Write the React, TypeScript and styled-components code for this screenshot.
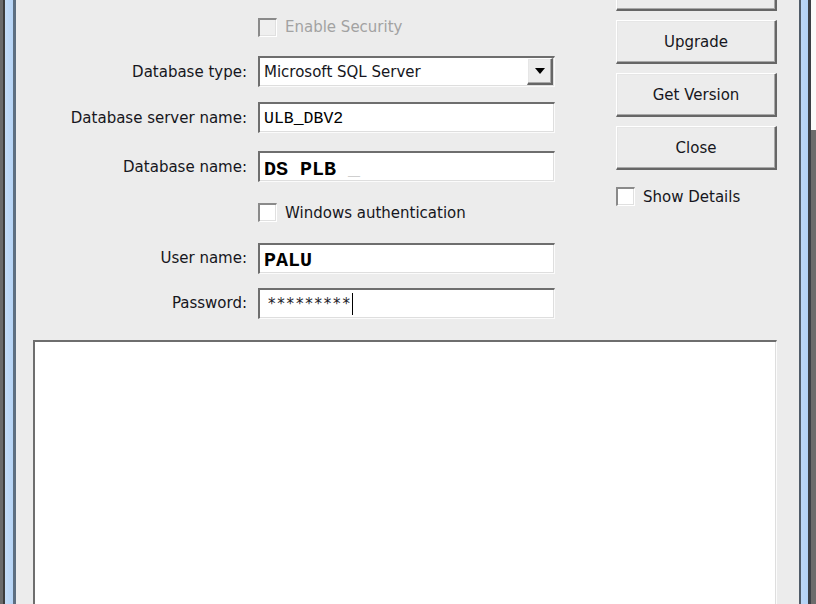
import { createGlobalStyle } from 'styled-components'
import styled from 'styled-components'

const GlobalStyle = createGlobalStyle`
	html, body {
		margin: 0;
		padding: 0;
		overflow: hidden;
		background: #ececec;
	}
`

const sans = `'DejaVu Sans', Verdana, sans-serif`
const mono = `'Liberation Mono', 'Courier New', monospace`

const Window = styled.div`
	display: flex;
	width: 816px;
	height: 604px;
	overflow: hidden;
	font-family: ${sans};
	font-size: 15px;
	color: #161620;
`

const LeftFrame = styled.div`
	width: 16px;
	flex: none;
	background: linear-gradient(
		to right,
		#6a6a6a 0,
		#6a6a6a 3px,
		#3c3c3c 3px,
		#3c3c3c 5px,
		#c4dcf6 5px,
		#b6d4f6 13px,
		#5d6e80 13px,
		#5d6e80 16px
	);
`

const RightFrame = styled.div`
	width: 17px;
	flex: none;
	display: flex;
`

const FrameEdge = styled.div`
	width: 12px;
	background: linear-gradient(
		to right,
		#4f5b68 0,
		#4f5b68 2px,
		#bcd7f6 2px,
		#b2d2f6 9px,
		#3b4046 9px,
		#3b4046 12px
	);
`

const Backdrop = styled.div`
	flex: 1;
	background: linear-gradient(to bottom, #fafafa 0, #fafafa 130px, #6c6c6c 130px);
`

const Client = styled.div`
	flex: 1;
	display: flex;
	flex-direction: column;
	padding: 8px 22px 0 17px;
	background: #ececec;
	overflow: hidden;
`

const Top = styled.div`
	display: flex;
	justify-content: space-between;
	align-items: flex-start;
`

const Form = styled.div`
	display: grid;
	grid-template-columns: 214px 297px;
	grid-template-rows: 38px 51px 41px 57px 35px 56px 34px;
	column-gap: 11px;
	align-items: center;
`

const Label = styled.div`
	grid-column: 1;
	text-align: right;
	white-space: nowrap;
`

const sunken = `
	box-sizing: border-box;
	border-style: solid;
	border-width: 2px 1px 1px 2px;
	border-color: #6e6e6e #fbfbfb #fbfbfb #6e6e6e;
	box-shadow: inset -1px -1px 0 #dedede;
	background: #ffffff;
`

const raised = `
	box-sizing: border-box;
	border-style: solid;
	border-width: 1px 2px 2px 1px;
	border-color: #ffffff #666666 #666666 #ffffff;
	box-shadow: inset -1px -1px 0 #a8a8a8, inset 1px 1px 0 #e6e6e6;
	background: #ececec;
`

const TextBox = styled.div<{ $kind?: 'sans' | 'mono' | 'bold' }>`
	grid-column: 2;
	${sunken}
	height: 31px;
	display: flex;
	align-items: center;
	white-space: pre;
	padding-left: ${(p) => (p.$kind === 'sans' ? '8px' : '4px')};
	padding-top: ${(p) => (p.$kind === 'bold' ? '4px' : '0')};
	font-family: ${(p) => (p.$kind === 'sans' ? sans : mono)};
	font-size: ${(p) => (p.$kind === 'bold' ? '20px' : '16.5px')};
	font-weight: ${(p) => (p.$kind === 'bold' ? 700 : 400)};
	color: #000;
`

const Faint = styled.span`
	color: #cfcfcf;
`

const Stars = styled.span`
	font-family: ${sans};
	font-size: 15px;
	letter-spacing: 1.8px;
	color: #1a1a28;
`

const Caret = styled.span`
	width: 1px;
	height: 22px;
	background: #000;
`

const Select = styled.div`
	grid-column: 2;
	${sunken}
	height: 31px;
	display: flex;
	align-items: center;
	padding: 0 1px 1px 4px;
`

const SelectValue = styled.div`
	flex: 1;
`

const DropButton = styled.div`
	${raised}
	width: 26px;
	height: 27px;
	display: flex;
	align-items: center;
	justify-content: center;
`

const CheckRow = styled.label<{ $disabled?: boolean }>`
	grid-column: 2;
	display: flex;
	align-items: center;
	gap: 8px;
	color: ${(p) => (p.$disabled ? '#a2a2a2' : 'inherit')};
	white-space: nowrap;
`

const Box = styled.span<{ $disabled?: boolean }>`
	box-sizing: border-box;
	width: 19px;
	height: 19px;
	border-style: solid;
	border-width: 2px 1px 1px 2px;
	border-color: #8a8a8a #ffffff #ffffff #8a8a8a;
	box-shadow: inset -1px -1px 0 #e0e0e0;
	background: ${(p) => (p.$disabled ? '#efefef' : '#ffffff')};
`

const Buttons = styled.div`
	width: 161px;
	margin-top: -41px;
	display: flex;
	flex-direction: column;
	gap: 9px;
`

const Button = styled.div`
	${raised}
	height: 44px;
	display: flex;
	align-items: center;
	justify-content: center;
	padding-top: 1px;
`

const DetailsRow = styled(CheckRow)`
	margin-top: 8px;
`

const Output = styled.div`
	${sunken}
	margin-top: 20px;
	height: 300px;
	flex: none;
`

export default function App() {
	return (
		<>
			<GlobalStyle />
			<Window>
				<LeftFrame />
				<Client>
					<Top>
						<Form>
							<CheckRow $disabled>
								<Box $disabled />
								Enable Security
							</CheckRow>

							<Label>Database type:</Label>
							<Select>
								<SelectValue>Microsoft SQL Server</SelectValue>
								<DropButton>
									<svg width="10" height="6" viewBox="0 0 10 6">
										<path d="M0 0h10L5 6z" fill="#000" />
									</svg>
								</DropButton>
							</Select>

							<Label>Database server name:</Label>
							<TextBox $kind="mono">ULB_DBV2</TextBox>

							<Label>Database name:</Label>
							<TextBox $kind="bold">
								{'DS PLB '}
								<Faint>_</Faint>
							</TextBox>

							<CheckRow>
								<Box />
								Windows authentication
							</CheckRow>

							<Label>User name:</Label>
							<TextBox $kind="bold">PALU</TextBox>

							<Label>Password:</Label>
							<TextBox $kind="sans">
								<Stars>*********</Stars>
								<Caret />
							</TextBox>
						</Form>

						<Buttons>
							<Button />
							<Button>Upgrade</Button>
							<Button>Get Version</Button>
							<Button>Close</Button>
							<DetailsRow>
								<Box />
								Show Details
							</DetailsRow>
						</Buttons>
					</Top>
					<Output />
				</Client>
				<RightFrame>
					<FrameEdge />
					<Backdrop />
				</RightFrame>
			</Window>
		</>
	)
}
